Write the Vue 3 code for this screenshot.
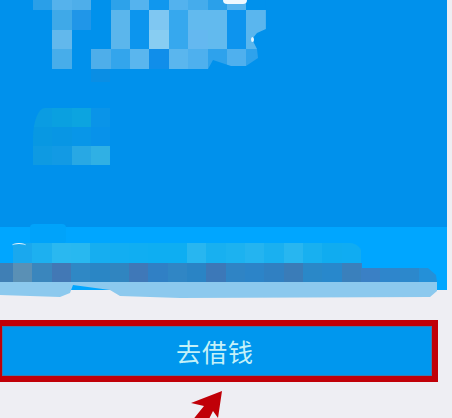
<script setup>
const bg = '#0091ec'
const topCells = [
  '#2a9fe8','#55b2ec','#4eaeea',bg,'#2da2ea','#55b3ee','#1097ee','#53b2ee','#45acec','#2aa0ea','#55b3ee',bg,
  bg,'#3fa9e8','#2096e8',bg,'#5bb6ec','#0c95ee','#7fc7f2','#36a8ee','#62baee','#62baee','#0d94ee','#5ab6ee',
  bg,'#62b8ec',bg,bg,'#5bb6ec','#0c95ee','#88cdf2','#36a8ee','#64b8f0','#62baee','#0d94ee','#5ab6ee',
  bg,'#47adea',bg,'#4eaeea','#33a5ec','#5ab6ee','#108eea','#5ab6ee','#4eb0ee','#2ea2ec','#4fb0ee','#2ea2ec',
  bg,bg,bg,'#0a8ee4',bg,bg,bg,bg,bg,bg,bg,bg
]
const midCells = [
  '#0a9ce2','#0aa0e0','#0ca4e0','#0a94e8',
  '#0898e2','#0896e4','#0896e8','#0892ea',
  '#0e9ae2','#129ae4','#28a8e4','#30b0e4'
]
const rowA = ['#1aa8ee','#1db0f0','#2ab8f0','#28b8f0','#16aef0','#12aef2','#10aef2','#0eaef2','#0eaef2','#28b6f0','#18b0f0','#1cb2f0','#24b4f0','#1ab0f0','#28b6f0','#18b0f0','#10acf0','#10acf2']
const rowB = ['#3f7fb5','#5a90b5','#3a86bd','#4278b5','#2f88c5','#2a86c5','#3085c0','#3f78b8','#3080c5','#3086c5','#2a84c5','#3c78b8','#2f84c5','#2c84c8','#3080c2','#3a7cb8','#2a88c8','#2888cc','#3a80bc','#3a80c5','#2e86cc','#2c88cc','#2490d8']
</script>

<template>
  <div class="page">
    <section class="hero">
      <div class="mosaic top">
        <i v-for="(c, i) in topCells" :key="i" :style="{ background: c }"></i>
      </div>
      <span class="glint"></span>
      <span class="spark"></span>
      <div class="mosaic mid">
        <i v-for="(c, i) in midCells" :key="i" :style="{ background: c }"></i>
      </div>
    </section>
    <section class="band">
      <div class="bump"></div>
      <div class="strip">
        <div class="row a"><i v-for="(c, i) in rowA" :key="i" :style="{ background: c }"></i></div>
        <div class="row b"><i v-for="(c, i) in rowB" :key="i" :style="{ background: c }"></i></div>
        <div class="row c"></div>
      </div>
      <span class="arc"></span>
    </section>
    <button class="cta">去借钱</button>
    <svg class="arrow" width="60" height="36" viewBox="0 0 60 36">
      <path d="M41 0 L10 12 L23 15 L6 36 L24 36 L32 20 L37 27 Z" fill="#c00008" />
    </svg>
  </div>
</template>

<style scoped>
.page {
  position: relative;
  width: 452px;
  height: 418px;
  overflow: hidden;
  background: #eeeef3;
  font-family: "Noto Sans CJK SC", "Noto Sans", sans-serif;
}
.hero {
  position: relative;
  width: 447px;
  height: 227px;
  background: #0091ec;
}
.mosaic {
  position: absolute;
  display: grid;
  left: 33px;
}
.mosaic i {
  display: block;
}
.top {
  top: 0;
  grid-template-columns: repeat(12, 19.42px);
  grid-template-rows: 10px 20px 19px 20px 13px;
  clip-path: polygon(0 0, 100% 0, 100% 29px, 224px 33px, 219px 39px, 224px 49px, 225px 58px, 213px 66px, 198px 66px, 180px 60px, 175px 69px, 77px 69px, 77px 82px, 58px 82px, 58px 69px, 0 69px);
}
.mid {
  top: 108px;
  grid-template-columns: repeat(4, 19.3px);
  grid-template-rows: 19px 19px 19px;
  border-top-left-radius: 12px 30px;
  overflow: hidden;
}
.glint {
  position: absolute;
  left: 223px;
  top: 0;
  width: 24px;
  height: 4px;
  background: #eef8ff;
  border-radius: 0 0 12px 12px;
}
.spark {
  position: absolute;
  left: 251px;
  top: 37px;
  width: 3px;
  height: 5px;
  background: #e6f6ff;
  border-radius: 50%;
}
.band {
  position: relative;
  width: 447px;
  height: 63px;
  background: #00a6ff;
}
.bump {
  position: absolute;
  left: 30px;
  top: -3px;
  width: 36px;
  height: 20px;
  background: #00a3fa;
  border-radius: 4px;
}
.strip {
  position: absolute;
  left: 0;
  top: 16px;
  width: 437px;
}
.row {
  display: flex;
}
.row i {
  flex: none;
  width: 19.33px;
  height: 100%;
}
.a {
  height: 20px;
  padding-left: 13px;
  width: 362px;
  box-sizing: border-box;
  border-top-right-radius: 12px;
  overflow: hidden;
}
.b {
  height: 19px;
  clip-path: polygon(0 0, 362px 0, 362px 5px, 428px 5px, 436px 12px, 437px 19px, 0 19px);
}
.b i:first-child {
  width: 13px;
}
.c {
  height: 16px;
  background: #8cc9ee;
  clip-path: polygon(0 0, 437px 0, 437px 9px, 430px 15px, 180px 16px, 120px 14px, 110px 8px, 73px 3px, 70px 11px, 60px 15px, 0 13px);
}
.arc {
  position: absolute;
  left: 12px;
  top: 16px;
  width: 14px;
  height: 4px;
  border-top: 1px solid #e8f6ff;
  border-radius: 50%;
}
.cta {
  display: block;
  box-sizing: border-box;
  width: 438px;
  height: 62px;
  margin: 30px 0 0;
  padding: 0 4px 0 0;
  border: 6px solid #c00008;
  border-left-width: 2px;
  background: #0097ee;
  box-shadow: inset 0 0 0 1px #3a7cb0;
  color: #c4f1f8;
  font: 400 25px/1 "Noto Sans CJK SC", "Noto Sans", sans-serif;
  letter-spacing: 1px;
}
.arrow {
  display: block;
  margin: 9px 0 0 181px;
}
</style>
<style>
html, body { margin: 0; }
</style>
